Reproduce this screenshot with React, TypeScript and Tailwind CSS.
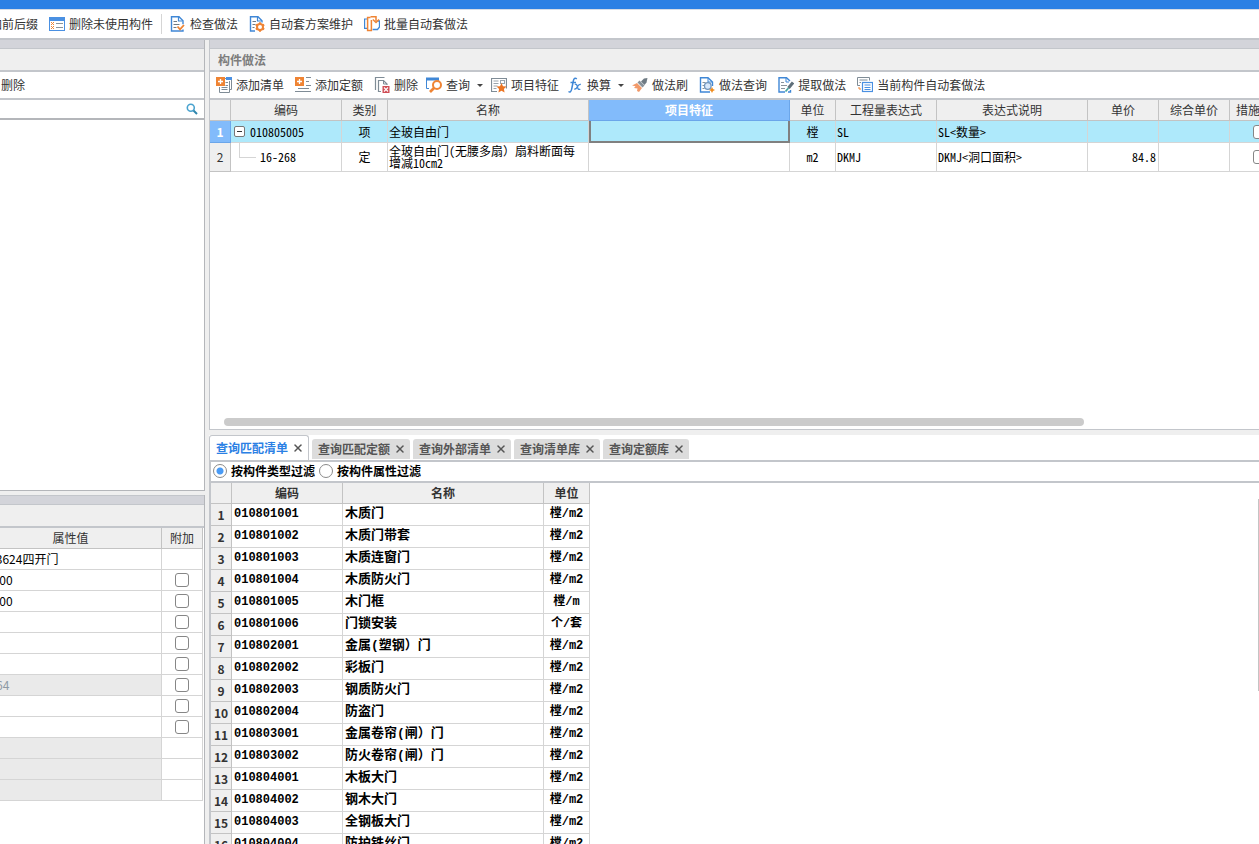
import React, { useState } from 'react';
import { X } from 'lucide-react';
import clsx from 'clsx';

interface Tool {
  label: string;
  icon: React.ReactNode;
  menu?: boolean;
  tight?: boolean;
}

interface BillItem {
  code: string;
  name: string;
  unit: string;
}

const BLUE = '#3f87d6';
const ORANGE = '#ef8434';
const GREY = '#7f8c96';

const Svg = ({ children }: { children: React.ReactNode }) => (
  <svg width="16" height="16" viewBox="0 0 16 16" fill="none" className="shrink-0" aria-hidden="true">
    {children}
  </svg>
);

const CleanIcon = () => (
  <Svg>
    <rect x="0.5" y="1.5" width="15" height="13" fill="#fff" stroke="#4a90e2" />
    <rect x="0" y="1" width="16" height="4" fill="#4a90e2" />
    <path d="M2 6l3 3M5 6L2 9M2 10l3 3M5 10l-3 3" stroke={ORANGE} />
    <path d="M7 7.5h7M7 11.5h7" stroke="#8a949c" />
  </Svg>
);

const CheckDocIcon = () => (
  <Svg>
    <path d="M13 13.500v1.500H1.500V.7h7.500l4 4v3.500" stroke={BLUE} strokeWidth="1.400" />
    <path d="M8.500 1v4h4" stroke={BLUE} strokeWidth="1.200" />
    <path d="M3.500 5.500h3.500M3.500 8.500h6M3.500 11.500h3" stroke="#6f7b84" strokeWidth="1.200" />
    <path d="M7.500 10.500l2.500 2.800 4-4.300" stroke={ORANGE} strokeWidth="1.800" />
  </Svg>
);

const SchemeIcon = () => (
  <Svg>
    <path d="M6 15H1.500V.7h7.500l4 4v1.800" stroke={BLUE} strokeWidth="1.400" />
    <path d="M8.500 1v4h4" stroke={BLUE} strokeWidth="1.200" />
    <path d="M3.500 5.500h3.500M3.500 8.500h3M3.500 11.500h2" stroke="#6f7b84" strokeWidth="1.200" />
    <circle cx="11" cy="11" r="3" stroke={ORANGE} strokeWidth="2" />
    <path d="M11 6.200v2M11 13.800v2M6.800 8.600l1.700 1M13.500 12.400l1.700 1M6.800 13.400l1.700-1M13.500 9.600l1.700-1" stroke={ORANGE} strokeWidth="2" />
  </Svg>
);

const BatchIcon = () => (
  <Svg>
    <path d="M3 3H.6v9.400H3" stroke={BLUE} strokeWidth="1.200" />
    <path d="M13.500 5h2v6l-2 2.500H8.600" stroke={BLUE} strokeWidth="1.300" />
    <path d="M6.500 1.500H3.600v13h3.800V4" stroke={ORANGE} strokeWidth="1.500" />
    <path d="M6.500.8H12v4.500" stroke={ORANGE} strokeWidth="1.500" />
    <path d="M8.800 3.500L12 6.500l3-3" stroke={ORANGE} strokeWidth="1.500" />
  </Svg>
);

const AddListIcon = () => (
  <Svg>
    <path d="M9 1.500h6.500v11H14M13.500 4v11.500H3.500V10" stroke={GREY} />
    <path d="M10 1.500h6" stroke="#4a90e2" strokeWidth="3" />
    <path d="M9.500 5.500h2.500M9.500 8.500h2.500M5.500 10.500h6M5.500 12.500h6" stroke={GREY} />
    <rect x="0" y="0" width="9" height="9" fill={ORANGE} />
    <path d="M4.500 2v5M2 4.500h5" stroke="#fff" strokeWidth="1.300" />
  </Svg>
);

const AddQuotaIcon = () => (
  <Svg>
    <rect x="0" y="0" width="9" height="9" fill={ORANGE} />
    <path d="M4.500 2v5M2 4.500h5" stroke="#fff" strokeWidth="1.300" />
    <path d="M11 .5h5M11 4.500h3M11 8.500h5M3 11.500h11M0 14.500h16" stroke={GREY} strokeWidth="1.200" />
  </Svg>
);

const DeleteIcon = () => (
  <Svg>
    <path d="M1.500 13V.5h9" stroke={GREY} strokeWidth="1.200" />
    <path d="M7 14.500H4.500v-11h5l3.500 3.500V8" stroke={GREY} strokeWidth="1.200" />
    <path d="M9.500 3.500v3.500H13" stroke={GREY} />
    <rect x="8.500" y="9" width="7" height="7" fill="#cf4d55" />
    <path d="M10 10.500l4 4M14 10.500l-4 4" stroke="#fff" strokeWidth="1.100" />
  </Svg>
);

const QueryIcon = () => (
  <Svg>
    <path d="M3 11.500H.5V2M12.500 2v2" stroke={BLUE} />
    <path d="M0 2h13" stroke={BLUE} strokeWidth="3" />
    <circle cx="11" cy="8" r="4" fill="#fff" stroke={ORANGE} strokeWidth="2" />
    <path d="M8 11l-4 4" stroke={ORANGE} strokeWidth="2.600" />
  </Svg>
);

const FeatureIcon = () => (
  <Svg>
    <path d="M6 14.500H.5V1.500h15v10" stroke={GREY} strokeWidth="1.200" />
    <path d="M2.500 4h5M2.500 6.500h5M2.500 9h4M2.500 11.500h3" stroke="#9aa4ac" />
    <rect x="9.500" y="3.500" width="4" height="3" stroke="#9aa4ac" />
    <path d="M10.500 6l1.500 3.200 3.500.4-2.600 2.400.7 3.500-3.100-1.700-3.100 1.700.7-3.500L5.500 9.600l3.500-.4z" fill="#ec7523" />
  </Svg>
);

const FxIcon = () => (
  <Svg>
    <path d="M9.800 1.800C8 .4 6.800 1.500 6.300 4L4.700 12C4.300 14.500 3 15.500 1.500 14.500M3.500 5.500h5.500" stroke={BLUE} strokeWidth="1.500" />
    <path d="M7.800 7.500c1.500-.8 2 0 2.500 1.900.5 2.300 1 3.800 3 2.700M13.800 7.500c-2-.5-2.900 1.300-3.500 2.500-.8 1.300-1.500 2.500-3 1.900" stroke={BLUE} strokeWidth="1.300" />
  </Svg>
);

const BrushIcon = () => (
  <Svg>
    <path d="M15.500 1l-3.500.5-3 3 3.500 3.500 2-2.500z" fill="#6f7b84" />
    <path d="M7.500 3.500L5.500 5.500l5 5 2-2z" fill="#87929a" />
    <path d="M5 6L0 8.500l3.500.8L2 11l3.500.5-.5 2.500 2 1L10 11z" fill="#f29a6a" />
  </Svg>
);

const DocSearchIcon = () => (
  <Svg>
    <path d="M11 15H1.500V.7H9l4.500 4.300v4" stroke={BLUE} strokeWidth="1.400" />
    <path d="M9 1v4h4" stroke={BLUE} />
    <path d="M3.500 5.500h3M3.500 8.500h1.500M3.500 11.500h2" stroke="#8a949c" />
    <circle cx="8.800" cy="9" r="3.300" fill="#d9e8fa" stroke="#7296bd" strokeWidth="1.300" />
    <path d="M13 10l1 2 2 1-2 1-1 2-1-2-2-1 2-1z" fill="#f08b1d" />
  </Svg>
);

const ExtractIcon = () => (
  <Svg>
    <path d="M7 15H1V.7h7.500L12 4M12.500 13v2H10" stroke={BLUE} strokeWidth="1.400" />
    <path d="M8 1v4h3" stroke={BLUE} />
    <path d="M3 5.500h3M3 8.500h6M3 11.500h4" stroke="#8a949c" strokeWidth="1.200" />
    <path d="M15 5.500l-4.500 5.500" stroke="#5f6f7a" strokeWidth="3" />
    <path d="M10.500 11l-3 3.500" stroke="#49a7a0" strokeWidth="1.800" />
  </Svg>
);

const AutoIcon = () => (
  <Svg>
    <path d="M3 8.500H.5v-8h12v3" stroke={GREY} />
    <path d="M2.500 3h8M2.500 5.500h1.500" stroke={GREY} />
    <path d="M2 10v2h2" stroke={ORANGE} />
    <rect x="5.500" y="5.500" width="10" height="9" fill="#fff" stroke="#4a90e2" strokeWidth="1.200" />
    <path d="M7.500 8h6M7.500 10.500h6M7.500 12.500h6" stroke="#4a90e2" />
  </Svg>
);

const SearchIcon = () => (
  <svg width="12" height="12" viewBox="0 0 12 12" fill="none" aria-hidden="true">
    <circle cx="4.800" cy="4.800" r="3.500" stroke="#4aa3cf" strokeWidth="1.600" />
    <path d="M7.500 7.500L11 11" stroke="#2f86ad" strokeWidth="2" />
  </svg>
);

const recipeTools: Tool[] = [
  { label: '添加清单', icon: <AddListIcon /> },
  { label: '添加定额', icon: <AddQuotaIcon /> },
  { label: '删除', icon: <DeleteIcon />, tight: true },
  { label: '查询', icon: <QueryIcon />, menu: true, tight: true },
  { label: '项目特征', icon: <FeatureIcon />, tight: true },
  { label: '换算', icon: <FxIcon />, menu: true, tight: true },
  { label: '做法刷', icon: <BrushIcon /> },
  { label: '做法查询', icon: <DocSearchIcon /> },
  { label: '提取做法', icon: <ExtractIcon /> },
  { label: '当前构件自动套做法', icon: <AutoIcon /> },
];

const tabs = ['查询匹配清单', '查询匹配定额', '查询外部清单', '查询清单库', '查询定额库'];

const billItems: BillItem[] = [
  { code: '010801001', name: '木质门', unit: '樘/m2' },
  { code: '010801002', name: '木质门带套', unit: '樘/m2' },
  { code: '010801003', name: '木质连窗门', unit: '樘/m2' },
  { code: '010801004', name: '木质防火门', unit: '樘/m2' },
  { code: '010801005', name: '木门框', unit: '樘/m' },
  { code: '010801006', name: '门锁安装', unit: '个/套' },
  { code: '010802001', name: '金属(塑钢）门', unit: '樘/m2' },
  { code: '010802002', name: '彩板门', unit: '樘/m2' },
  { code: '010802003', name: '钢质防火门', unit: '樘/m2' },
  { code: '010802004', name: '防盗门', unit: '樘/m2' },
  { code: '010803001', name: '金属卷帘(闸）门', unit: '樘/m2' },
  { code: '010803002', name: '防火卷帘(闸）门', unit: '樘/m2' },
  { code: '010804001', name: '木板大门', unit: '樘/m2' },
  { code: '010804002', name: '钢木大门', unit: '樘/m2' },
  { code: '010804003', name: '全钢板大门', unit: '樘/m2' },
  { code: '010804004', name: '防护铁丝门', unit: '樘/m2' },
];

const properties = [
  { value: 'M3624四开门', check: false, locked: false },
  { value: '3600', check: true, locked: false },
  { value: '2400', check: true, locked: false },
  { value: '', check: true, locked: false },
  { value: '', check: true, locked: false },
  { value: '', check: true, locked: false },
  { value: '8.64', check: true, locked: true },
  { value: '', check: true, locked: false },
  { value: '', check: true, locked: false },
  { value: '', check: false, locked: true },
  { value: '', check: false, locked: true },
  { value: '', check: false, locked: true },
];

const headCell = 'h-[21px] border-r border-b border-[#c3c3c3] bg-[#efefef] p-0 text-center';
const cell = 'border-r border-b border-[#d5d5d5] p-0';
const mono = "font-['Liberation_Mono','Noto_Sans_CJK_SC',monospace]";

const Check = ({ label }: { label: string }) => (
  <input
    type="checkbox"
    aria-label={label}
    className="mx-auto block size-[14px] appearance-none rounded-[3px] border border-[#868686] bg-white checked:bg-[#4a90e2]"
  />
);

// latin letters and digits run half as wide as the hanzi beside them
const Half = ({ children }: { children: React.ReactNode }) => <span className="[font-feature-settings:'hwid']">{children}</span>;

const ToolButton = ({ label, icon, menu, tight }: Tool) => (
  <button type="button" className={clsx('flex shrink-0 items-center gap-1 whitespace-nowrap', tight ? 'mr-2' : 'mr-[11px]')}>
    {icon}
    {label}
    {menu && <span className="ml-[3px] border-x-[3px] border-t-[3px] border-x-transparent border-t-[#444]" />}
  </button>
);

function LeftColumn() {
  return (
    <div className="flex w-[205px] shrink-0 flex-col">
      <section className="flex min-h-0 grow-[451] basis-0 flex-col border-r border-b border-[#b4b6ba] bg-white">
        <div className="h-[9px] shrink-0 border-b border-[#c3c6cb] bg-[#d3d4da]" />
        <div className="h-[23px] shrink-0 border-b-2 border-[#c3c6cb] bg-[#efefef]" />
        <div className="flex h-7 shrink-0 items-center border-b-2 border-[#c3c6cb] pl-px">
          <button type="button">删除</button>
        </div>
        <label className="flex h-5 shrink-0 items-center border-b-2 border-[#b4b6ba] pr-[6px]">
          <input type="text" aria-label="搜索构件" className="h-4 min-w-0 flex-1 px-1 outline-none" />
          <SearchIcon />
        </label>
      </section>

      <section className="mt-1 flex min-h-0 grow-[349] basis-0 flex-col border-r border-[#b4b6ba] bg-white">
        <div className="h-[10px] shrink-0 border-y border-[#c3c6cb] bg-[#d3d4da]" />
        <div className="h-[23px] shrink-0 border-b-2 border-[#c3c6cb] bg-[#efefef]" />
        <div className="flex min-h-0 flex-1 items-start justify-end overflow-hidden pr-px">
          <table className="w-[223px] shrink-0 table-fixed border-separate border-spacing-0">
            <colgroup>
              <col className="w-[182px]" />
              <col className="w-[41px]" />
            </colgroup>
            <thead>
              <tr>
                <th className={clsx(headCell, 'font-normal')}>属性值</th>
                <th className={clsx(headCell, 'font-normal')}>附加</th>
              </tr>
            </thead>
            <tbody>
              {properties.map((p, i) => (
                <tr key={i} className="h-[21px]">
                  <td className={clsx(cell, 'pl-[6px]', p.locked ? 'bg-[#eaeaea] text-[#8d9aa5]' : 'text-black')}>{p.value}</td>
                  <td className={cell}>{p.check && <Check label={`附加 ${i + 1}`} />}</td>
                </tr>
              ))}
            </tbody>
          </table>
        </div>
      </section>
    </div>
  );
}

function RecipeTable() {
  return (
    <table className="w-[1081px] table-fixed border-separate border-spacing-0">
      <colgroup>
        <col className="w-[21px]" />
        <col className="w-[111px]" />
        <col className="w-[46px]" />
        <col className="w-[201px]" />
        <col className="w-[201px]" />
        <col className="w-[46px]" />
        <col className="w-[101px]" />
        <col className="w-[151px]" />
        <col className="w-[71px]" />
        <col className="w-[71px]" />
        <col className="w-[61px]" />
      </colgroup>
      <thead>
        <tr>
          <th className={headCell} />
          {['编码', '类别', '名称', '项目特征', '单位', '工程量表达式', '表达式说明', '单价', '综合单价', '措施项目'].map((h) => (
            <th
              key={h}
              className={clsx(
                'h-[21px] border-r border-b p-0 text-center',
                h === '项目特征' ? 'border-[#6ba6ea] bg-[#82bbfb] font-bold text-white' : 'border-[#c3c3c3] bg-[#efefef] font-normal',
              )}
            >
              {h}
            </th>
          ))}
        </tr>
      </thead>
      <tbody className="text-black">
        <tr className="h-[22px] bg-[#aee9fb]">
          <th className="border-r border-b border-[#6ba6ea] bg-[#82bbfb] p-0 font-bold text-white">1</th>
          <td className={cell}>
            <span className="flex items-center gap-[5px] pl-[3px]">
              <button type="button" aria-label="折叠" className="flex size-[11px] items-center justify-center rounded-[2px] border border-[#777] bg-white">
                <span className="h-px w-[5px] bg-[#333]" />
              </button>
              <Half>010805005</Half>
            </span>
          </td>
          <td className={clsx(cell, 'text-center')}>项</td>
          <td className={clsx(cell, 'pl-px')}>全玻自由门</td>
          <td className="border-r-2 border-b-2 border-l-2 border-[#808080] p-0" />
          <td className={clsx(cell, 'text-center')}>樘</td>
          <td className={clsx(cell, 'pl-px')}><Half>SL</Half></td>
          <td className={clsx(cell, 'pl-px')}><Half>SL&lt;数量&gt;</Half></td>
          <td className={cell} />
          <td className={cell} />
          <td className={cell}><Check label="措施项目 1" /></td>
        </tr>
        <tr className="h-[29px]">
          <th className={clsx(headCell, 'font-normal text-[#333]')}>2</th>
          <td className={cell}>
            <span className="flex h-7 items-center gap-1 pl-2">
              <span className="h-[15px] w-[17px] self-start border-b border-l border-[#d5d5d5]" />
              <Half>16-268</Half>
            </span>
          </td>
          <td className={clsx(cell, 'text-center')}>定</td>
          <td className={clsx(cell, 'pr-2 pl-px leading-3')}>全玻自由门<Half>(</Half>无腰多扇）扇料断面每增减<Half>10cm2</Half></td>
          <td className={cell} />
          <td className={clsx(cell, 'text-center')}><Half>m2</Half></td>
          <td className={clsx(cell, 'pl-px')}><Half>DKMJ</Half></td>
          <td className={clsx(cell, 'pl-px')}><Half>DKMJ&lt;洞口面积&gt;</Half></td>
          <td className={clsx(cell, 'pr-[2px] text-right')}><Half>84.8</Half></td>
          <td className={cell} />
          <td className={cell}><Check label="措施项目 2" /></td>
        </tr>
      </tbody>
    </table>
  );
}

function MatchTable() {
  return (
    <table className="w-[379px] table-fixed border-separate border-spacing-0 font-bold">
      <colgroup>
        <col className="w-[21px]" />
        <col className="w-[111px]" />
        <col className="w-[201px]" />
        <col className="w-[46px]" />
      </colgroup>
      <thead>
        <tr>
          <th className={headCell} />
          <th className={headCell}>编码</th>
          <th className={headCell}>名称</th>
          <th className={headCell}>单位</th>
        </tr>
      </thead>
      <tbody>
        {billItems.map((item, i) => (
          <tr key={item.code} className="h-[22px]">
            <th className="border-r border-b border-[#c3c3c3] bg-[#efefef] p-0 pt-px text-[#333]">{i + 1}</th>
            <td className={clsx(cell, mono, 'pl-[2px] align-top leading-5 text-black')}>{item.code}</td>
            <td className={clsx(cell, mono, 'pl-[2px] align-top text-[13px] leading-5 text-black')}>{item.name}</td>
            <td className={clsx(cell, mono, 'text-center align-top leading-5 text-black')}>{item.unit}</td>
          </tr>
        ))}
      </tbody>
    </table>
  );
}

export default function App() {
  const [activeTab, setActiveTab] = useState(0);
  const [filter, setFilter] = useState('按构件类型过滤');

  return (
    <div className="flex h-screen flex-col overflow-hidden bg-[#efefef] font-['Noto_Sans_CJK_SC',sans-serif] text-[12px] leading-4 text-[#333]">
      <div className="h-[10px] shrink-0 border-b border-[#d6dde6] bg-[#2b80e4]" />
      <nav className="flex h-[30px] shrink-0 items-center overflow-hidden border-b-2 border-[#c3c6cb] bg-white">
        <button type="button" className="-ml-[22px] mr-[11px] shrink-0">添加前后缀</button>
        <ToolButton label="删除未使用构件" icon={<CleanIcon />} tight />
        <span className="mr-2 h-5 w-px shrink-0 bg-[#d5d5d5]" />
        <ToolButton label="检查做法" icon={<CheckDocIcon />} />
        <ToolButton label="自动套方案维护" icon={<SchemeIcon />} />
        <ToolButton label="批量自动套做法" icon={<BatchIcon />} />
      </nav>

      <main className="flex min-h-0 flex-1">
        <LeftColumn />

        <div className="ml-1 flex min-w-0 flex-1 flex-col">
          <section className="flex min-h-0 grow-[389] basis-0 flex-col overflow-hidden border-b border-l border-[#c3c6cb] bg-white">
            <div className="h-[9px] shrink-0 border-b border-[#c3c6cb] bg-[#d3d4da]" />
            <h2 className="flex h-[23px] shrink-0 items-center border-b-2 border-[#c3c6cb] bg-[#efefef] pl-2 font-bold text-[#7d7d7d]">
              构件做法
            </h2>
            <div className="flex h-7 shrink-0 items-center overflow-hidden border-b-2 border-[#c3c6cb] pl-[6px]">
              {recipeTools.map((t) => (
                <ToolButton key={t.label} {...t} />
              ))}
            </div>
            <div className="min-h-0 flex-1 overflow-hidden">
              <RecipeTable />
            </div>
            <div className="mb-[3px] ml-[14px] h-2 w-[82%] shrink-0 rounded-full bg-[#cbcbcb]" />
          </section>

          <section className="mt-[5px] flex min-h-0 grow-[410] basis-0 flex-col bg-white">
            <div role="tablist" className="flex h-[27px] shrink-0 items-end gap-[3px] border-b-2 border-[#c3c6cb]">
              {tabs.map((t, i) => (
                <button
                  key={t}
                  type="button"
                  role="tab"
                  aria-selected={i === activeTab}
                  onClick={() => setActiveTab(i)}
                  className={clsx(
                    'flex shrink-0 items-center gap-1 rounded-t-[3px] px-[6px] font-bold',
                    i === activeTab
                      ? 'h-[25px] border border-b-0 border-[#c3c6cb] bg-white text-[#2b80e4]'
                      : 'mb-px h-5 bg-[#dcdcdc] text-[#555]',
                  )}
                >
                  {t}
                  <X className="-mr-[2px] size-[12px] text-[#555]" strokeWidth={3} />
                </button>
              ))}
            </div>
            <div className="flex h-[21px] shrink-0 items-center gap-1 border-b-2 border-l-2 border-[#c3c6cb] pl-[2px] font-bold text-black">
              {['按构件类型过滤', '按构件属性过滤'].map((f) => (
                <label key={f} className="flex items-center gap-1">
                  <input
                    type="radio"
                    name="filter"
                    checked={filter === f}
                    onChange={() => setFilter(f)}
                    className="size-[14px] appearance-none rounded-full border border-[#8a8a8a] bg-white checked:bg-[radial-gradient(circle,#4a9bf5_3px,#fff_4px)]"
                  />
                  {f}
                </label>
              ))}
            </div>
            <div className="flex min-h-0 flex-1 items-start justify-between overflow-hidden border-l-2 border-[#c3c6cb]">
              <MatchTable />
              <div className="mt-4 h-48 w-px bg-[#c4c4c4]" />
            </div>
          </section>
        </div>
      </main>
    </div>
  );
}
